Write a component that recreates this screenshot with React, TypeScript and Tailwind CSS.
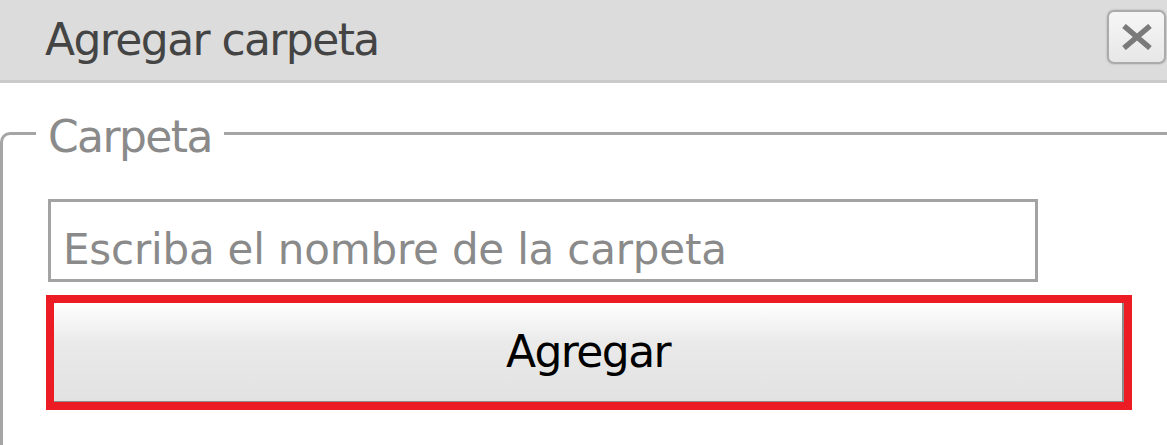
import React from 'react';

const font = { fontFamily: '"DejaVu Sans", Verdana, sans-serif' };

function CloseButton() {
  return (
    <button
      type="button"
      className="flex h-[54px] w-[59px] items-center justify-center rounded-[7px] border-2 border-[#ababab] bg-gradient-to-b from-[#f6f6f6] to-[#e7e7e7] shadow-[0_0_2px_rgba(0,0,0,0.25)]"
    >
      <svg width="30" height="26" viewBox="0 0 30 26">
        <path d="M2 2 L28 24 M28 2 L2 24" stroke="#7a7a7a" strokeWidth="5.5" />
      </svg>
    </button>
  );
}

export default function App() {
  return (
    <div className="h-[445px] w-[1167px] overflow-hidden bg-white" style={font}>
      <div className="flex h-[83px] items-center justify-between border-b-[3px] border-[#cbcbcb] bg-[#dcdcdc] pl-[45px] pr-[1px]">
        <span className="text-[44px] leading-none tracking-[-1.6px] text-[#444444]">Agregar carpeta</span>
        <div className="-mt-[7px]">
          <CloseButton />
        </div>
      </div>

      <fieldset className="mt-[25px] w-[1200px] rounded-tl-[10px] border-[3px] border-[#a5a5a5] pb-[200px]">
        <legend className="ml-[33px] px-[12px] pt-[7px] text-[44px] leading-[44px] tracking-[-1.6px] text-[#8a8a8a]">
          Carpeta
        </legend>
        <div className="flex flex-col pl-[43px] pt-[40px]">
          <input
            type="text"
            placeholder="Escriba el nombre de la carpeta"
            className="ml-[2px] h-[83px] w-[990px] border-[3px] border-[#a3a3a3] bg-white pl-[12px] pt-[17px] text-[42px] tracking-[-0.2px] text-[#333] outline-none placeholder:text-[#8a8a8a]"
            style={font}
          />
          <button
            type="button"
            className="mt-[13px] h-[115px] w-[1086px] border-[8px] border-[#ed1c24] bg-[#ed1c24]"
            style={font}
          >
            <div className="flex h-full w-full items-center justify-center border-b border-r-2 border-[#8c8c8c] bg-gradient-to-b from-white via-[#eaeaea] via-40% to-[#e2e2e2] text-[44px] leading-none tracking-[-1.6px] text-black">
              Agregar
            </div>
          </button>
        </div>
      </fieldset>
    </div>
  );
}
